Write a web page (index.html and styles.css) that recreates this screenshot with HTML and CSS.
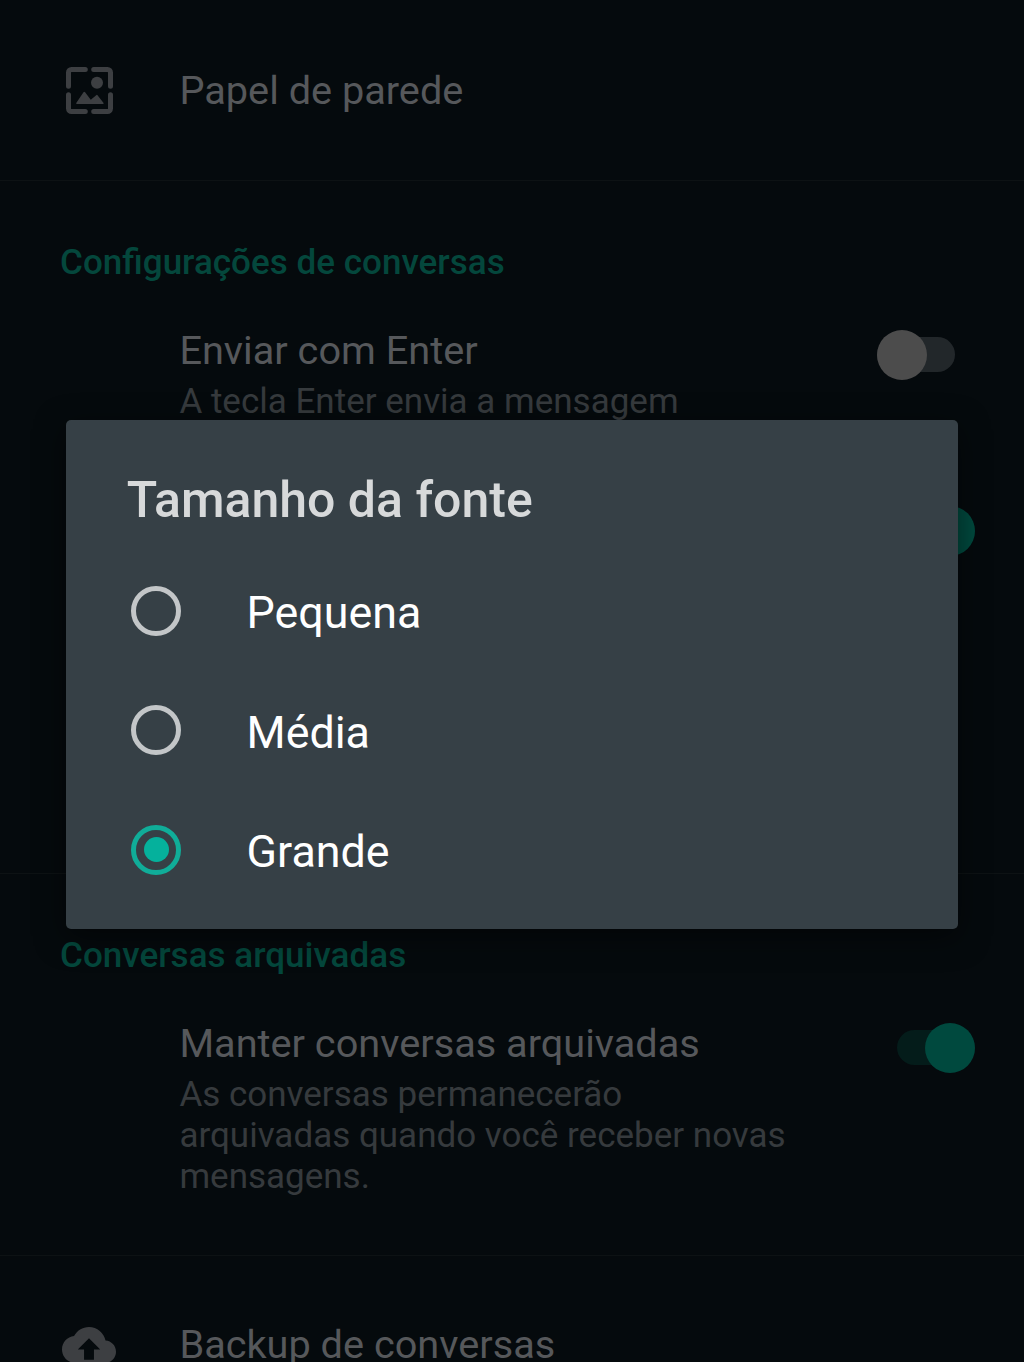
FILE: index.html
```html
<!DOCTYPE html>
<html lang="pt-BR">
<head>
    <meta charset="UTF-8">
    <meta name="viewport" content="width=device-width, initial-scale=1.0">
    <title>Conversas</title>
    <link rel="stylesheet" href="styles.css">
</head>
<body>
    <main class="settings">
        <div class="link-row">
            <svg class="icon-wallpaper" viewBox="0 0 47 47">
                <path class="frame" d="M2.5 19.3V5.5a3 3 0 0 1 3-3H19.3M27.7 2.5H41.5a3 3 0 0 1 3 3V19.3M44.5 27.7V41.5a3 3 0 0 1-3 3H27.7M19.3 44.5H5.5a3 3 0 0 1-3-3V27.7"/>
                <circle cx="31" cy="15.8" r="6"/>
                <path d="M10.6 36.9Q9.8 36.7 10.4 35.8L17.5 25.3Q18.3 24.2 19.1 25.3L24.8 32.8L30.2 28.2Q31 27.4 31.7 28.4L37.4 35.8Q38 36.7 37.2 36.9Z"/>
            </svg>
            <span class="title">Papel de parede</span>
        </div>

        <section class="section">
            <h2>Configurações de conversas</h2>
            <div class="row">
                <div class="row-text">
                    <div class="title">Enviar com Enter</div>
                    <div class="subtitle">A tecla Enter envia a mensagem</div>
                </div>
                <div class="switch"></div>
            </div>
            <div class="row covered">
                <div class="switch on"></div>
            </div>
        </section>

        <section class="section">
            <h2>Conversas arquivadas</h2>
            <div class="row">
                <div class="row-text">
                    <div class="title">Manter conversas arquivadas</div>
                    <div class="subtitle">As conversas permanecerão arquivadas quando você receber novas mensagens.</div>
                </div>
                <div class="switch on"></div>
            </div>
        </section>

        <div class="link-row bordered">
            <svg class="icon-cloud" viewBox="0 0 24 24">
                <path d="M19.35 10.04C18.67 6.59 15.64 4 12 4 9.11 4 6.6 5.64 5.35 8.04 2.34 8.36 0 10.91 0 14c0 3.31 2.69 6 6 6h13c2.76 0 5-2.24 5-5 0-2.64-2.05-4.78-4.65-4.96zM14.2 14v4.5H9.8V14H7l5-5 5 5h-2.8z"/>
            </svg>
            <span class="title">Backup de conversas</span>
        </div>
    </main>

    <div class="dialog">
        <h1>Tamanho da fonte</h1>
        <div class="option"><span class="radio"></span>Pequena</div>
        <div class="option"><span class="radio"></span>Média</div>
        <div class="option"><span class="radio checked"></span>Grande</div>
    </div>
</body>
</html>
```
FILE: styles.css
```css
* {
    box-sizing: border-box;
}

body {
    margin: 0;
    position: relative;
    height: 1362px;
    overflow: hidden;
    background: #050a0d;
    font-family: Roboto, "Liberation Sans", sans-serif;
}

.settings {
    width: 1024px;
    height: 1362px;
    overflow: hidden;
}

/* rows with an icon */
.link-row {
    display: flex;
    align-items: center;
    height: 180px;
}

.link-row svg {
    flex: none;
    fill: #3d3f42;
}

.link-row .title {
    margin-left: auto;
    width: 844.6px;
}

.icon-wallpaper {
    width: 47px;
    height: 47px;
    margin-left: 66px;
}

.icon-wallpaper .frame {
    fill: none;
    stroke: #3d3f42;
    stroke-width: 5;
    stroke-linecap: round;
}

.icon-cloud {
    width: 54px;
    height: 54px;
    margin-left: 62px;
}

.bordered,
.section {
    border-top: 1px solid #0d1214;
}

.link-row.bordered {
    height: 178px;
}

/* sections */
.section {
    padding: 60px 49px 58px 60px;
}

h2 {
    margin: 0 0 45px;
    font-size: 35.05px;
    font-weight: 500;
    line-height: 42px;
    color: #04473c;
}

.row {
    display: flex;
    justify-content: space-between;
    margin-top: -1px;
    padding-left: 119.4px;
}

.row.covered {
    justify-content: flex-end;
    height: 312px;
    margin-top: 81px;
}

.row-text {
    width: 620px;
}

.title {
    font-size: 39.7px;
    line-height: 47px;
    color: #56585b;
    white-space: nowrap;
}

.subtitle {
    margin-top: 7px;
    font-size: 35px;
    line-height: 41px;
    color: #363a3d;
}

.switch {
    position: relative;
    width: 78px;
    height: 35px;
    margin: 10px 20px 0 0;
    border-radius: 18px;
    background: #22272a;
}

.switch::after {
    content: "";
    position: absolute;
    top: -7px;
    left: 0;
    width: 50px;
    height: 50px;
    border-radius: 50%;
    background: #4c4c4c;
}

.switch.on {
    margin-right: 0;
    background: #041c1a;
}

.switch.on::after {
    left: 28px;
    background: #00493e;
}

/* font size dialog */
.dialog {
    position: absolute;
    top: 420px;
    left: 66.4px;
    width: 891.2px;
    height: 509px;
    padding: 50px 60.4px 0;
    border-radius: 5px;
    background: #364046;
    box-shadow: 0 8px 30px rgba(0, 0, 0, 0.5);
}

h1 {
    margin: 0 0 21px;
    font-size: 50px;
    font-weight: 500;
    line-height: 60px;
    color: #d7d9da;
}

.option {
    display: flex;
    align-items: center;
    height: 119.5px;
    padding-top: 4px;
    font-size: 44.8px;
    color: #fff;
}

.radio {
    display: grid;
    place-items: center;
    width: 50px;
    height: 50px;
    margin: -4px 65.3px 0 4.5px;
    border: 5px solid #c3c6c8;
    border-radius: 50%;
}

.radio.checked {
    border-color: #10ad99;
}

.radio.checked::after {
    content: "";
    width: 25px;
    height: 25px;
    border-radius: 50%;
    background: #05b19c;
}
```
